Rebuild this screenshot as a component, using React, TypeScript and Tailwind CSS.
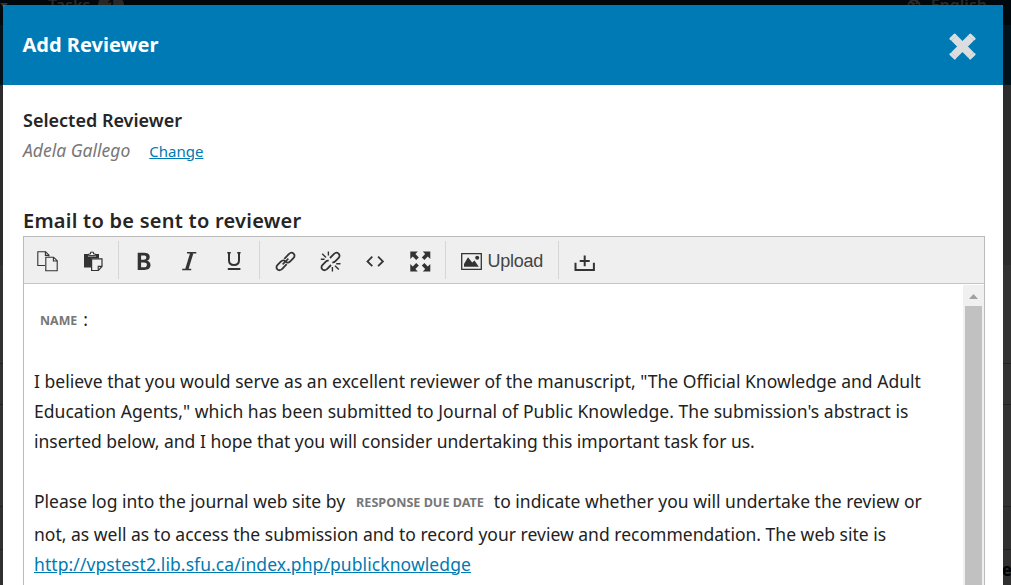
import React from "react";

const ink = "#333";

function Icon({ children }: { children: React.ReactNode }) {
  return (
    <button type="button" className="flex h-full w-[45px] items-center justify-center pt-[3px]">
      <svg width="21" height="21" viewBox="0 0 21 21" fill="none" stroke={ink} strokeWidth="1.4">
        {children}
      </svg>
    </button>
  );
}

function Group({ children }: { children: React.ReactNode }) {
  return <div className="flex h-[38px] border-l border-[#d6d6d6] pr-[2.5px] pl-[2.5px]">{children}</div>;
}

function LinkHalves() {
  return (
    <g strokeWidth="1.8">
      <path d="M9.3 7.8L14 3C15.3 1.6 17.2 1.3 18.6 2.6C20 4 19.7 5.9 18.4 7.2L15.2 10.4C13.8 11.8 12 12 10.6 10.7" />
      <path d="M11.7 13.2L7 18C5.7 19.4 3.8 19.7 2.4 18.4C1 17 1.3 15.1 2.6 13.8L5.8 10.6C7.2 9.2 9 9 10.4 10.3" />
      <path d="M7.6 13.4L13.4 7.6" strokeWidth="1.5" />
    </g>
  );
}

function Toolbar() {
  return (
    <div className="flex h-[47px] shrink-0 items-center border-b border-[#c5c5c5] bg-[#efefef] pl-px">
      <div className="flex h-[38px] w-[93px]">
        <Icon>
          <g strokeWidth="1.1">
            <path d="M8 14.5H.8V.8H8.6L12 4.2V5.6" />
            <path d="M8.4 .8V4.4H12" />
            <path d="M8.8 6.2H16.6L20.2 9.8V19.8H8.8Z" />
            <path d="M16.4 6.2V10H20.2" />
          </g>
        </Icon>
        <Icon>
          <g transform="translate(1 0)">
            <path d="M1 3H5V5.5H13V3H16V7.5H8V16.5H1Z" fill={ink} stroke="none" />
            <path d="M5.5 4.6V3H7.5V1.2H10.5V3H12.6V4.6Z" strokeWidth="1" fill="#efefef" />
            <path d="M8.6 7.8H19V15.5L15.3 19.5H8.6Z" strokeWidth="1.2" fill="#efefef" />
            <path d="M19 15.4H15.2V19.4" strokeWidth="1.1" />
          </g>
        </Icon>
      </div>
      <Group>
        <Icon>
          <path
            d="M3.7 1.8H9.9C13.9 1.8 15.7 3.4 15.7 6C15.7 8 14.7 9.3 13 9.8C15.2 10.3 16.5 11.8 16.5 14.1C16.5 17.3 14.2 19 10.3 19H3.7ZM7.1 4.5V8.7H9.5C11.3 8.7 12.3 8 12.3 6.5C12.3 5.1 11.4 4.5 9.5 4.5ZM7.1 11.4V16.3H9.8C11.9 16.3 12.9 15.4 12.9 13.7C12.9 12.1 11.9 11.4 9.8 11.4Z"
            fill={ink}
            fillRule="evenodd"
            stroke="none"
          />
        </Icon>
        <Icon>
          <path d="M8 1.7H17.3M3.2 18.6H12.2" strokeWidth="1.5" />
          <path d="M12.8 2L7.8 18.3" strokeWidth="3.2" />
        </Icon>
        <Icon>
          <path d="M5 1.2V9.2C5 12.4 6.8 14 10 14C13.2 14 15 12.4 15 9.2V1.2" strokeWidth="2" />
          <path d="M3.3 1.8H6.8M13.2 1.8H16.6" strokeWidth="1.4" />
          <path d="M3.8 18H16.4" strokeWidth="2" />
        </Icon>
      </Group>
      <Group>
        <Icon>
          <LinkHalves />
        </Icon>
        <Icon>
          <g strokeWidth="1.8">
            <path d="M10 7L14 3C15.3 1.6 17.2 1.3 18.6 2.6C20 4 19.7 5.9 18.4 7.2L15.2 10.4C14.4 11.2 13.4 11.5 12.3 11.3" />
            <path d="M11 14L7 18C5.7 19.4 3.8 19.7 2.4 18.4C1 17 1.3 15.1 2.6 13.8L5.8 10.6C6.6 9.8 7.6 9.5 8.7 9.7" />
          </g>
          <path d="M.8 8.2H4.6M2.2 2.8L6 6.5M8.4 .6V4.6M12.4 16V20.4M15 14.7L18.8 18.6M16.2 12.8H20.5" strokeWidth="1.4" />
        </Icon>
        <Icon>
          <path d="M7.3 5.6L2.5 10.4L7.3 15.2M13.1 5.6L17.9 10.4L13.1 15.2" strokeWidth="1.8" />
        </Icon>
        <Icon>
          <path
            d="M.3 .5H7.8L5.4 3L8.8 6.4L6.2 9L2.8 5.6L.3 8ZM20.3 .5V8L17.8 5.6L14.4 9L11.8 6.4L15.2 3L12.8 .5ZM.3 20.5V13L2.8 15.4L6.2 12L8.8 14.6L5.4 18L7.8 20.5ZM20.3 20.5H12.8L15.2 18L11.8 14.6L14.4 12L17.8 15.4L20.3 13Z"
            fill={ink}
            stroke="none"
          />
        </Icon>
      </Group>
      <Group>
        <button type="button" className="flex w-[107px] items-center pt-px pl-[12.5px]">
          <svg width="21" height="17" viewBox="0 0 21 17" fill="none" stroke={ink} className="mt-[2px]">
            <path d="M.7 .7H20.3V16.3H.7Z" strokeWidth="1.3" />
            <path d="M3 13.8V11L7 4.2L11.2 9.4L13.5 7.6L17.8 13.8Z" fill={ink} stroke="none" />
            <circle cx="16.2" cy="4.7" r="2" fill={ink} stroke="none" />
          </svg>
          <span className="ml-[5.5px] font-['Liberation_Sans',sans-serif] text-[18px] leading-[24px] tracking-[-0.25px] text-[#444]">
            Upload
          </span>
        </button>
      </Group>
      <Group>
        <Icon>
          <path d="M1.5 11.7V19H19.9V11.7" strokeWidth="2" />
          <path d="M10.7 4.5V15.3M5.7 10H15.7" strokeWidth="2" />
        </Icon>
      </Group>
    </div>
  );
}

function Line({ className = "h-[30px]", children }: { className?: string; children?: React.ReactNode }) {
  return <div className={`flex items-center whitespace-pre ${className}`}>{children}</div>;
}

function Backdrop() {
  return (
    <div className="absolute inset-0 flex flex-col overflow-hidden text-[#282828]">
      <div className="flex h-[25px] shrink-0 justify-between bg-[#00080d] text-[16px] leading-[20px] font-semibold">
        <div className="-mt-[5px] flex">
          <svg width="8" height="5" viewBox="0 0 8 5" className="mt-[8px] mr-[40px]">
            <path d="M0 0H8L4 5Z" fill="#333" />
          </svg>
          <span>Tasks</span>
          <span className="ml-2 h-5 w-[26px] rounded-full bg-[#282828] text-center text-[#00080d]">1</span>
        </div>
        <div className="-mt-[5px] mr-[24px] flex">
          <svg width="14" height="14" viewBox="0 0 14 14" fill="none" stroke="#282828" strokeWidth="2" className="mt-[4px] mr-[10px]">
            <circle cx="7" cy="7" r="5.8" />
            <path d="M3 3L7 5L5 8M9 1L10 5" />
          </svg>
          <span>English</span>
        </div>
      </div>
      <div className="h-[60px] shrink-0 bg-[#00121c]" />
      <div className="h-[180px] shrink-0 bg-[#2c2c2c]" />
      <div className="h-[98px] shrink-0 bg-[#323232]" />
      <div className="h-[41px] shrink-0 border-t border-[#222] bg-[#323232]" />
      <div className="h-[102px] shrink-0 border-t border-[#222] bg-[#323232]" />
      <div className="h-[43px] shrink-0 border-t border-[#222] bg-[#303030]" />
      <div className="flex h-[36px] shrink-0 justify-end border-t border-[#222] bg-[#303030] pt-[8px] text-[17px] leading-[24px] font-bold text-black">
        <span className="-mr-[1px]">Re</span>
      </div>
    </div>
  );
}

export default function App() {
  return (
    <div className="relative h-[585px] w-[1011px] overflow-hidden font-['Noto_Sans',sans-serif]">
      <Backdrop />
      <section className="absolute top-[5px] left-[3px] flex h-[580px] w-[1000px] flex-col overflow-hidden rounded-t-[2px] bg-white">
        <header className="flex h-[80px] shrink-0 items-center justify-between bg-[#007ab4] pr-[27px] pl-[19.5px]">
          <h1 className="text-[20px] leading-[28px] font-bold text-white">Add Reviewer</h1>
          <svg width="27" height="27" viewBox="0 0 28 28" className="mt-[3px]">
            <path d="M5 5L23 23M23 5L5 23" stroke="#ddd" strokeWidth="8" strokeLinecap="butt" />
            <path d="M6 2L2 6M22 2L26 6M2 22L6 26M26 22L22 26" stroke="#ddd" strokeWidth="3" strokeLinecap="round" />
          </svg>
        </header>
        <div className="flex min-h-0 flex-1 flex-col pr-[18px] pl-[20px]">
          <div className="mt-[20px] flex h-[30px] items-center text-[18px] font-semibold text-[#252525]">
            <span>Selected Reviewer</span>
          </div>
          <div className="flex h-[30px] items-center">
            <span className="text-[17.5px] text-[#777] italic">Adela Gallego</span>
            <a className="mt-[2px] ml-[19px] text-[15px] text-[#007ab2] underline">Change</a>
          </div>
          <h2 className="mt-[40px] flex h-[31px] items-center text-[20px] font-semibold tracking-[0.25px] text-[#252525]">
            <span>Email to be sent to reviewer</span>
          </h2>
          <div className="flex h-[349px] w-[962px] shrink-0 flex-col border border-b-0 border-[#bbb]">
            <Toolbar />
            <div className="flex min-h-0 flex-1 justify-between">
              <div className="pt-[20px] pl-[10px] text-[17.5px] text-[#222]">
                <Line>
                  <span className="mt-[4px] ml-[6px] text-[12.4px] font-bold text-[#777]">NAME</span>
                  <span className="ml-[6px]">:</span>
                </Line>
                <Line className="mt-[32px] h-[30px] tracking-[0.02px]">
                  <span>I believe that you would serve as an excellent reviewer of the manuscript, "The Official Knowledge and Adult</span>
                </Line>
                <Line className="h-[30px] tracking-[0.04px]">
                  <span>Education Agents," which has been submitted to Journal of Public Knowledge. The submission's abstract is</span>
                </Line>
                <Line>
                  <span>inserted below, and I hope that you will consider undertaking this important task for us.</span>
                </Line>
                <Line className="mt-[30px] h-[30px]">
                  <span>Please log into the journal web site by</span>
                  <span className="mt-[5px] ml-[11px] text-[12.6px] font-bold text-[#777]">RESPONSE DUE DATE</span>
                  <span className="ml-[10px] tracking-[0.01px]">to indicate whether you will undertake the review or</span>
                </Line>
                <Line className="mt-[3px] h-[30px] tracking-[0.01px]">
                  <span>not, as well as to access the submission and to record your review and recommendation. The web site is</span>
                </Line>
                <Line className="h-[30px] tracking-[0.08px]">
                  <a className="text-[#007ab2] underline">http://vpstest2.lib.sfu.ca/index.php/publicknowledge</a>
                </Line>
              </div>
              <div className="mt-px flex w-[21px] shrink-0 flex-col items-center bg-[#f0f0f0]">
                <div className="flex h-[21px] shrink-0 items-center justify-center">
                  <svg width="9" height="5" viewBox="0 0 9 5" className="mt-[2px]">
                    <path d="M0 5L4.5 0L9 5Z" fill="#a0a0a0" />
                  </svg>
                </div>
                <div className="w-[17px] flex-1 bg-[#c1c1c1]" />
              </div>
            </div>
          </div>
        </div>
      </section>
    </div>
  );
}
